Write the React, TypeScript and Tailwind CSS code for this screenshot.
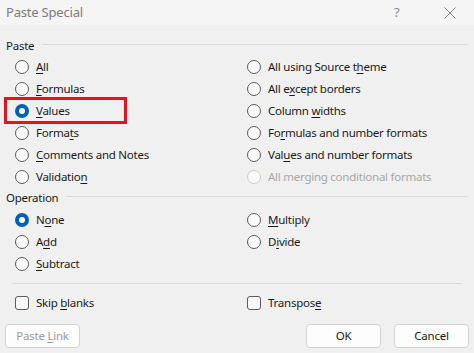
import React from "react";

type Opt = { label: string; key: number; checked?: boolean; disabled?: boolean } | null;

function Label({ label, k }: { label: string; k: number }) {
  if (k < 0) return <span>{label}</span>;
  return (
    <span>
      {label.slice(0, k)}
      <span className="underline underline-offset-2">{label[k]}</span>
      {label.slice(k + 1)}
    </span>
  );
}

function Radio({ opt }: { opt: Opt }) {
  if (!opt) return <div className="h-[22px]" />;
  return (
    <div className={`flex h-[22px] items-center gap-[7px] ${opt.disabled ? "text-[#a8a8a8]" : "text-[#1a1a1a]"}`}>
      {opt.checked ? (
        <span className="flex h-[14px] w-[14px] items-center justify-center rounded-full bg-[#005fb8]">
          <span className="h-[6px] w-[6px] rounded-full bg-white" />
        </span>
      ) : (
        <span
          className={`h-[14px] w-[14px] rounded-full border bg-[#fafafa] ${opt.disabled ? "border-[#cfcfcf]" : "border-[#5a5a5a]"}`}
        />
      )}
      <Label label={opt.label} k={opt.key} />
    </div>
  );
}

function Check({ label, k }: { label: string; k: number }) {
  return (
    <div className="flex h-[22px] items-center gap-[7px] text-[#1a1a1a]">
      <span className="h-[14px] w-[14px] rounded-[3px] border border-[#5a5a5a] bg-[#f7f7f7]" />
      <Label label={label} k={k} />
    </div>
  );
}

function Header({ title }: { title: string }) {
  return (
    <div className="flex h-[20px] items-center gap-[8px] pl-[6px] pr-[6px] text-[#1a1a1a]">
      <span>{title}</span>
      <div className="mt-[-4px] h-px flex-1 bg-[#dcdcdc]" />
    </div>
  );
}

function Button({ children, disabled }: { children: React.ReactNode; disabled?: boolean }) {
  return (
    <div
      className={`flex h-[24px] w-[75px] items-center justify-center rounded-[4px] border border-[#d3d3d3] bg-[#fdfdfd] ${disabled ? "text-[#9c9c9c]" : "text-[#1a1a1a]"}`}
    >
      {children}
    </div>
  );
}

const paste: [Opt, Opt][] = [
  [{ label: "All", key: 0 }, { label: "All using Source theme", key: 18 }],
  [{ label: "Formulas", key: 0 }, { label: "All except borders", key: 5 }],
  [{ label: "Values", key: 0, checked: true }, { label: "Column widths", key: 7 }],
  [{ label: "Formats", key: 5 }, { label: "Formulas and number formats", key: 2 }],
  [{ label: "Comments and Notes", key: 0 }, { label: "Values and number formats", key: 3 }],
  [{ label: "Validation", key: 9 }, { label: "All merging conditional formats", key: -1, disabled: true }],
];

const ops: [Opt, Opt][] = [
  [{ label: "None", key: 1, checked: true }, { label: "Multiply", key: 0 }],
  [{ label: "Add", key: 1 }, { label: "Divide", key: 1 }],
  [{ label: "Subtract", key: 0 }, null],
];

function Rows({ rows }: { rows: [Opt, Opt][] }) {
  return (
    <div className="grid grid-cols-[232px_1fr] pl-[15px]">
      {rows.map(([a, b], i) => (
        <React.Fragment key={i}>
          <Radio opt={a} />
          <Radio opt={b} />
        </React.Fragment>
      ))}
    </div>
  );
}

export default function App() {
  return (
    <div
      className="relative flex h-[353px] w-[474px] flex-col overflow-hidden bg-[#f0f0f0] text-[11.5px] leading-none tracking-[-0.25px]"
      style={{ fontFamily: '"Noto Sans", "Open Sans", sans-serif' }}
    >
      <div className="flex h-[25px] items-center bg-[#f5f5f5] pl-[6px] text-[#7c7c7c]">
        <span className="flex-1 text-[13px] tracking-[-0.2px]">Paste Special</span>
        <span className="w-[12px] text-[13px] text-[#8a8a8a]">?</span>
        <svg className="ml-[38px] mr-[18px]" width="12" height="12" viewBox="0 0 12 12">
          <path d="M0.5 0.5 L11.5 11.5 M11.5 0.5 L0.5 11.5" stroke="#8a8a8a" strokeWidth="1" />
        </svg>
      </div>
      <div className="h-[11px]" />
      <Header title="Paste" />
      <div className="relative">
        <Rows rows={paste} />
        <div className="pointer-events-none absolute left-[4px] top-[41px] h-[27px] w-[123px] border-[3px] border-[#e3141c]" />
      </div>
      <Header title="Operation" />
      <div className="h-px" />
      <Rows rows={ops} />
      <div className="mx-[12px] mt-[8px] h-px bg-[#dcdcdc]" />
      <div className="mt-[8px] grid grid-cols-[232px_1fr] pl-[15px]">
        <Check label="Skip blanks" k={5} />
        <Check label="Transpose" k={8} />
      </div>
      <div className="mt-[10px] flex px-[5px]">
        <Button disabled>
          <Label label="Paste Link" k={6} />
        </Button>
        <div className="flex-1" />
        <Button>OK</Button>
        <div className="w-[13px]" />
        <Button>Cancel</Button>
      </div>
    </div>
  );
}
